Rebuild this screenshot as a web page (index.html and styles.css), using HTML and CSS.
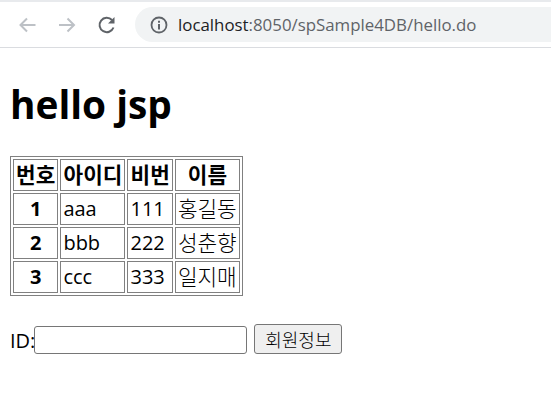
FILE: index.html
```html
<!DOCTYPE html>
<html>

<head>
    <meta charset="utf-8" />
    <title>hello jsp</title>
    <link rel="stylesheet" href="styles.css">
</head>

<body>
    <div class="toolbar">
        <svg class="nav" width="22" height="22" viewBox="0 0 22 22">
            <path d="M19.500 11H4M11 4.500L4.500 11l6.500 6.500" fill="none" stroke="#bdc1c6" stroke-width="2" />
        </svg>
        <svg class="nav" width="22" height="22" viewBox="0 0 22 22">
            <path d="M3 11h15.500M11.500 4.500L18 11l-6.500 6.500" fill="none" stroke="#bdc1c6" stroke-width="2" />
        </svg>
        <svg class="nav" width="22" height="22" viewBox="0 0 22 22">
            <path d="M17.500 13.500A7.200 7.200 0 1 1 16 6" fill="none" stroke="#5f6368" stroke-width="2" />
            <path d="M18.500 3v6.500H12z" fill="#5f6368" />
        </svg>
        <div class="omnibox">
            <svg width="20" height="20" viewBox="0 0 20 20">
                <circle cx="10" cy="10" r="7.500" fill="none" stroke="#5f6368" stroke-width="1.800" />
                <path d="M9 9h2v5.500H9zM9 5.800h2v2H9z" fill="#5f6368" />
            </svg>
            <span class="url"><span class="host">localhost</span>:8050/spSample4DB/hello.do</span>
        </div>
    </div>

    <div class="content">
        <h1>hello jsp</h1>
        <table class="members">
            <tr>
                <th class="ko">번호</th>
                <th class="ko">아이디</th>
                <th class="ko">비번</th>
                <th class="ko">이름</th>
            </tr>
            <tr>
                <th>1</th>
                <td>aaa</td>
                <td>111</td>
                <td class="ko">홍길동</td>
            </tr>
            <tr>
                <th>2</th>
                <td>bbb</td>
                <td>222</td>
                <td class="ko">성춘향</td>
            </tr>
            <tr>
                <th>3</th>
                <td>ccc</td>
                <td>333</td>
                <td class="ko">일지매</td>
            </tr>
        </table>
        <form class="search">
            <label for="id">ID:</label><input id="id" type="text" />
            <button type="button">회원정보</button>
        </form>
    </div>
</body>

</html>
```

FILE: styles.css
```css
* {
    box-sizing: border-box;
}

body {
    margin: 0;
    font-family: "Open Sans", "Noto Sans CJK KR", sans-serif;
    font-size: 20px;
    color: #000;
    background: #fff;
}

.toolbar {
    height: 48px;
    border-top: 2px solid #e8eaed;
    border-bottom: 1px solid #dadce0;
    display: flex;
    align-items: center;
    padding-left: 16px;
    gap: 18px;
    overflow: hidden;
}

.nav {
    flex: none;
}

.omnibox {
    flex: none;
    width: 440px;
    height: 35px;
    margin-left: -1px;
    border-radius: 18px;
    background: #f1f3f4;
    display: flex;
    align-items: center;
    gap: 9px;
    padding-left: 14px;
}

.url {
    font-size: 16.850px;
    color: #5f6368;
    white-space: nowrap;
}

.host {
    color: #202124;
}

.content {
    padding: 0 10px;
}

h1 {
    font-size: 38.800px;
    line-height: 54px;
    margin: 29px 0 25px;
}

.members {
    width: 233px;
    border: 1px solid #808080;
    border-spacing: 2px;
    line-height: 30px;
}

.members th,
.members td {
    border: 1px solid #808080;
    padding: 0 2px;
}

.members .ko {
    font-size: 21.300px;
}

.members td.ko {
    font-weight: 300;
}

.search {
    margin-top: 28px;
    display: flex;
    align-items: center;
}

.search label {
    margin-right: -1px;
}

.search input {
    width: 213px;
    height: 28px;
    border: 1px solid #767676;
    border-radius: 3px;
    padding: 1px 2px;
}

.search button {
    margin: 0 0 2px 7px;
    height: 30px;
    width: 88px;
    padding: 0;
    font-family: inherit;
    font-size: 18px;
    font-weight: 300;
    background: #efefef;
    border: 1px solid #767676;
    border-radius: 3px;
    color: #000;
}
```
